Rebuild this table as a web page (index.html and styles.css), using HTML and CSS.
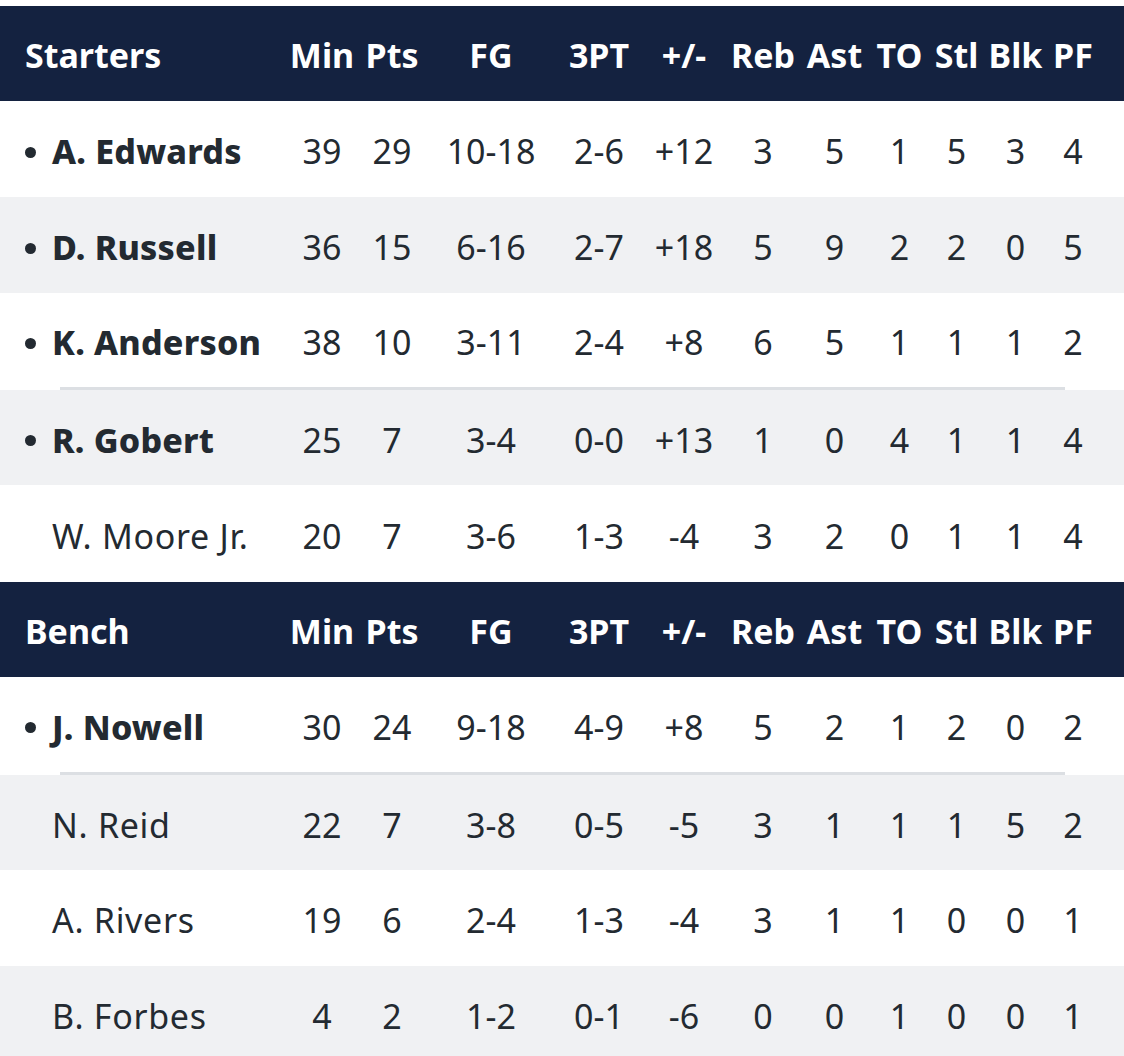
FILE: index.html
```html
<!DOCTYPE html>
<html>
<head>
<meta charset="utf-8">
<link rel="stylesheet" href="styles.css">
</head>
<body>
<div class="box">
  <div class="row head">
    <div class="name">Starters</div><div>Min</div><div>Pts</div><div>FG</div><div>3PT</div><div>+/-</div><div>Reb</div><div>Ast</div><div>TO</div><div>Stl</div><div>Blk</div><div>PF</div>
  </div>
  <div class="row">
    <div class="name"><span class="dot"></span><b>A. Edwards</b></div><div>39</div><div>29</div><div>10-18</div><div>2-6</div><div>+12</div><div>3</div><div>5</div><div>1</div><div>5</div><div>3</div><div>4</div>
  </div>
  <div class="row alt">
    <div class="name"><span class="dot"></span><b>D. Russell</b></div><div>36</div><div>15</div><div>6-16</div><div>2-7</div><div>+18</div><div>5</div><div>9</div><div>2</div><div>2</div><div>0</div><div>5</div>
  </div>
  <div class="row short">
    <div class="name"><span class="dot"></span><b>K. Anderson</b></div><div>38</div><div>10</div><div>3-11</div><div>2-4</div><div>+8</div><div>6</div><div>5</div><div>1</div><div>1</div><div>1</div><div>2</div>
  </div>
  <div class="sepwrap"><div class="sep"></div></div>
  <div class="row alt r95">
    <div class="name"><span class="dot"></span><b>R. Gobert</b></div><div>25</div><div>7</div><div>3-4</div><div>0-0</div><div>+13</div><div>1</div><div>0</div><div>4</div><div>1</div><div>1</div><div>4</div>
  </div>
  <div class="row r97">
    <div class="name"><span class="sp"></span><span class="reg">W. Moore Jr.</span></div><div>20</div><div>7</div><div>3-6</div><div>1-3</div><div>-4</div><div>3</div><div>2</div><div>0</div><div>1</div><div>1</div><div>4</div>
  </div>
  <div class="row head">
    <div class="name">Bench</div><div>Min</div><div>Pts</div><div>FG</div><div>3PT</div><div>+/-</div><div>Reb</div><div>Ast</div><div>TO</div><div>Stl</div><div>Blk</div><div>PF</div>
  </div>
  <div class="row r95">
    <div class="name"><span class="dot"></span><b>J. Nowell</b></div><div>30</div><div>24</div><div>9-18</div><div>4-9</div><div>+8</div><div>5</div><div>2</div><div>1</div><div>2</div><div>0</div><div>2</div>
  </div>
  <div class="sepwrap"><div class="sep"></div></div>
  <div class="row alt r95">
    <div class="name"><span class="sp"></span><span class="reg">N. Reid</span></div><div>22</div><div>7</div><div>3-8</div><div>0-5</div><div>-5</div><div>3</div><div>1</div><div>1</div><div>1</div><div>5</div><div>2</div>
  </div>
  <div class="row">
    <div class="name"><span class="sp"></span><span class="reg">A. Rivers</span></div><div>19</div><div>6</div><div>2-4</div><div>1-3</div><div>-4</div><div>3</div><div>1</div><div>1</div><div>0</div><div>0</div><div>1</div>
  </div>
  <div class="row alt">
    <div class="name"><span class="sp"></span><span class="reg">B. Forbes</span></div><div>4</div><div>2</div><div>1-2</div><div>0-1</div><div>-6</div><div>0</div><div>0</div><div>1</div><div>0</div><div>0</div><div>1</div>
  </div>
</div>
</body>
</html>
```
FILE: styles.css
```css
html, body {
  margin: 0;
  padding: 0;
  background: #ffffff;
}
body {
  font-family: "Noto Sans", "Open Sans", sans-serif;
  color: #232a31;
  font-size: 34px;
}
.box {
  padding-top: 6px;
}
.row {
  display: grid;
  grid-template-columns: 282px 80px 60px 138px 78px 92px 66px 77px 53px 61px 57px 58px;
  padding-right: 22px;
  height: 96px;
  align-items: center;
  text-align: center;
  background: #ffffff;
}
.row > div {
  white-space: nowrap;
  padding-top: 4px;
}
.row.alt {
  background: #f0f1f3;
}
.row.short {
  height: 94px;
}
.row.r95 {
  height: 95px;
}
.row.r97 {
  height: 97px;
}
.row.head {
  background: #142240;
  color: #ffffff;
  font-weight: 700;
  height: 95px;
}
.row.head > div {
  padding-top: 3px;
  padding-bottom: 0;
}
.row .name {
  text-align: left;
  padding-left: 24px;
  display: flex;
  align-items: center;
}
.row.head .name {
  padding-left: 25px;
}
.name b {
  font-weight: 800;
  letter-spacing: 0.2px;
}
.name .reg {
  letter-spacing: 0.7px;
}
.dot {
  display: inline-block;
  width: 11px;
  height: 11px;
  border-radius: 50%;
  background: #232a31;
  margin-right: 16px;
  margin-left: 1px;
  margin-top: 2px;
}
.sp {
  display: inline-block;
  width: 28px;
}
.sepwrap {
  background: #ffffff;
  padding: 0 59px 0 60px;
}
.sep {
  height: 3px;
  background: #dcdfe3;
}
```
